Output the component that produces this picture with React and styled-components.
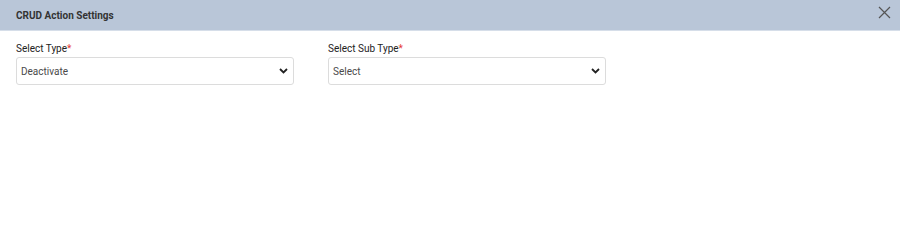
import React, { useState } from 'react';
import styled, { createGlobalStyle } from 'styled-components';

const GlobalStyle = createGlobalStyle`
  body {
    margin: 0;
    background: #fff;
    font-family: Roboto, "Liberation Sans", sans-serif;
  }
`;

const Modal = styled.div`
  width: 900px;
  height: 244px;
  background: #fff;
`;

const Header = styled.div`
  height: 31px;
  background: #b9c6d8;
  border-bottom: 1px solid #d6dee9;
  display: flex;
  align-items: center;
  justify-content: space-between;
  padding: 0 8px 0 16px;
  box-sizing: border-box;
`;

const Title = styled.h4`
  margin: 0;
  font-size: 10px;
  font-weight: 700;
  color: #333;
`;

const CloseButton = styled.button`
  border: none;
  background: transparent;
  padding: 0;
  width: 16px;
  height: 16px;
  display: flex;
  align-items: center;
  justify-content: center;
  cursor: pointer;
  margin-top: -6px;
`;

const Body = styled.div`
  display: flex;
  gap: 34px;
  padding: 11px 16px 0 16px;
`;

const Field = styled.div`
  width: 278px;
  display: flex;
  flex-direction: column;
`;

const Label = styled.label`
  font-size: 10px;
  color: #222;
  line-height: 13px;
  margin-bottom: 2px;

  span {
    color: #e53935;
  }
`;

const SelectWrap = styled.div`
  position: relative;
  height: 28px;
  border: 1px solid #dcdcdc;
  border-radius: 3px;
  box-sizing: border-box;
  display: flex;
  align-items: center;
`;

const Select = styled.select`
  appearance: none;
  border: none;
  background: transparent;
  width: 100%;
  height: 100%;
  padding: 0 24px 0 4px;
  font-family: inherit;
  font-size: 10px;
  color: #4a4a4a;
  outline: none;
`;

const Chevron = styled.svg`
  position: absolute;
  right: 5px;
  top: 10px;
  pointer-events: none;
`;

function SelectBox({ value, options, onChange }) {
  return (
    <SelectWrap>
      <Select value={value} onChange={(e) => onChange(e.target.value)}>
        {options.map((o) => (
          <option key={o} value={o}>{o}</option>
        ))}
      </Select>
      <Chevron width="9" height="6" viewBox="0 0 9 6">
        <path d="M1 1l3.5 3.5L8 1" fill="none" stroke="#222" strokeWidth="1.8" />
      </Chevron>
    </SelectWrap>
  );
}

export default function App() {
  const [type, setType] = useState('Deactivate');
  const [subType, setSubType] = useState('Select');

  return (
    <>
      <GlobalStyle />
      <Modal>
        <Header>
          <Title>CRUD Action Settings</Title>
          <CloseButton aria-label="close">
            <svg width="13" height="13" viewBox="0 0 13 13">
              <path d="M1 1l11 11M12 1L1 12" stroke="#555" strokeWidth="1.2" />
            </svg>
          </CloseButton>
        </Header>
        <Body>
          <Field>
            <Label>Select Type<span>*</span></Label>
            <SelectBox value={type} options={['Activate', 'Deactivate', 'Delete']} onChange={setType} />
          </Field>
          <Field>
            <Label>Select Sub Type<span>*</span></Label>
            <SelectBox value={subType} options={['Select']} onChange={setSubType} />
          </Field>
        </Body>
      </Modal>
    </>
  );
}
